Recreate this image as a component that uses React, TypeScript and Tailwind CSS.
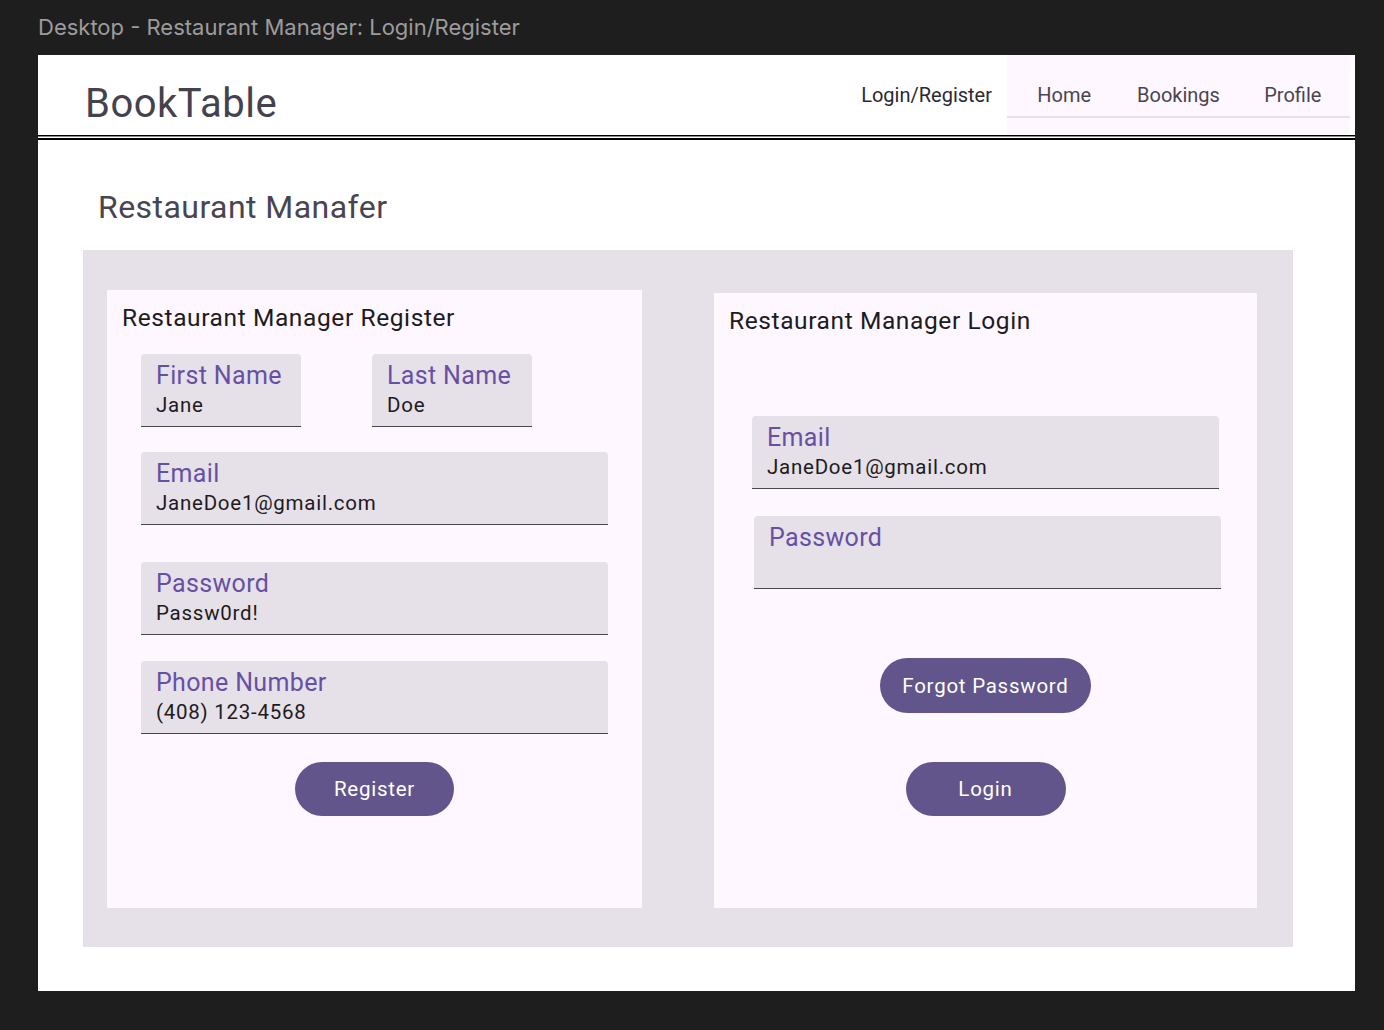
const roboto = { fontFamily: "Roboto, 'Noto Sans', sans-serif" };

function Field({ label, value, className }: { label: string; value?: string; className?: string }) {
  return (
    <div className={`h-[73px] rounded-t-[4px] bg-[#e6e0e9] border-b border-[#49454f] pl-[15px] pt-[8px] ${className ?? ""}`}>
      <div className="text-[25px] leading-[28px] tracking-[0.35px] text-[#6750a4]">{label}</div>
      {value && <div className="mt-[3px] text-[20.5px] leading-[24px] tracking-[0.75px] text-[#1d1b20]">{value}</div>}
    </div>
  );
}

function Pill({ children, className }: { children: string; className?: string }) {
  return (
    <button className={`h-[54px] rounded-full bg-[#62558b] text-white text-[20.5px] leading-[24px] tracking-[0.75px] ${className ?? ""}`}>
      {children}
    </button>
  );
}

const tabs = ["Home", "Bookings", "Profile"];

export default function App() {
  return (
    <div className="min-h-screen bg-[#1e1e1e] pb-[39px]" style={roboto}>
      {/* Figma frame label */}
      <div
        className="h-[55px] pl-[38px] flex items-center text-[22px] text-[#9c9c9c]"
        style={{ fontFamily: "Inter, 'Noto Sans', sans-serif" }}
      >
        Desktop - Restaurant Manager: Login/Register
      </div>

      <div className="ml-[38px] w-[1317px] h-[936px] bg-white">
        {/* ── Top bar ── */}
        <header className="h-[79px] flex">
          <div className="pl-[47px] pt-[25px] text-[40px] leading-[48px] tracking-[0.5px] text-[#45424d]">BookTable</div>
          <div className="ml-auto pt-[28px] pr-[15px] text-[20px] leading-[24px] text-[#2b2930]">Login/Register</div>
          <nav className="w-[343px] mr-[5px] bg-[#fef7ff]">
            <div className="h-[63px] flex border-b-2 border-[#e6e0e9]">
              {tabs.map((t) => (
                <div key={t} className="flex-1 pt-[28px] text-center text-[20px] leading-[24px] text-[#49454f]">
                  {t}
                </div>
              ))}
            </div>
          </nav>
        </header>
        <div className="h-[1px]" />
        <div className="border-t border-black" />
        <div className="border-t border-[#8a8a8a]" />
        <div className="h-[1px]" />
        <div className="border-t-2 border-black" />

        <h1 className="pl-[60px] pt-[47px] text-[32px] leading-[40px] tracking-[0.45px] text-[#49454f]">Restaurant Manafer</h1>

        {/* ── Forms panel ── */}
        <div className="mt-[23px] ml-[45px] w-[1210px] h-[697px] bg-[#e6e0e9] pl-[24px] pt-[40px] flex gap-[72px]">
          {/* Register */}
          <div className="w-[535px] h-[618px] bg-[#fef7ff] flex flex-col">
            <h2 className="pl-[15px] pt-[12px] text-[24.5px] leading-[32px] tracking-[0.6px] text-[#1d1b20]">Restaurant Manager Register</h2>
            <div className="pl-[34px] mt-[20px] flex flex-col">
              <div className="flex gap-[71px]">
                <Field label="First Name" value="Jane" className="w-[160px]" />
                <Field label="Last Name" value="Doe" className="w-[160px]" />
              </div>
              <Field label="Email" value="JaneDoe1@gmail.com" className="w-[467px] mt-[25px]" />
              <Field label="Password" value="Passw0rd!" className="w-[467px] mt-[37px]" />
              <Field label="Phone Number" value="(408) 123-4568" className="w-[467px] mt-[26px]" />
            </div>
            <Pill className="w-[159px] mt-[28px] self-center">Register</Pill>
          </div>

          {/* Login */}
          <div className="w-[543px] h-[615px] mt-[3px] bg-[#fef7ff] flex flex-col">
            <h2 className="pl-[15px] pt-[12px] text-[24.5px] leading-[32px] tracking-[0.6px] text-[#1d1b20]">Restaurant Manager Login</h2>
            <Field label="Email" value="JaneDoe1@gmail.com" className="w-[467px] ml-[38px] mt-[79px]" />
            <Field label="Password" className="w-[467px] ml-[40px] mt-[27px]" />
            <Pill className="w-[211px] h-[55px] mt-[69px] self-center">Forgot Password</Pill>
            <Pill className="w-[160px] mt-[49px] self-center">Login</Pill>
          </div>
        </div>
      </div>
    </div>
  );
}
